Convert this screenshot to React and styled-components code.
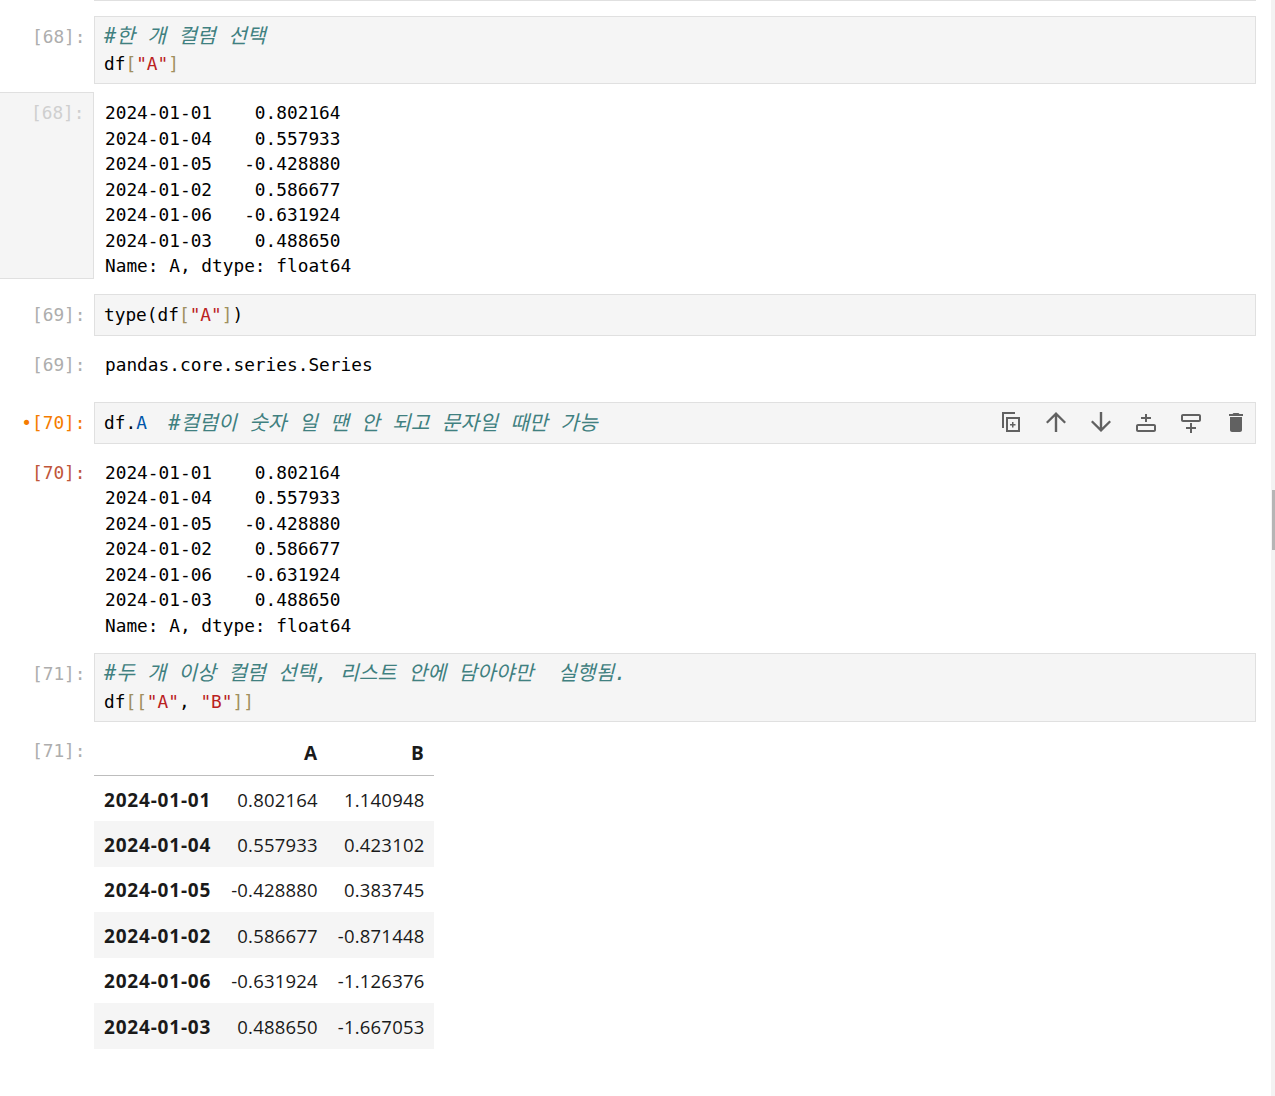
import React from "react";
import styled, { createGlobalStyle } from "styled-components";

const GlobalStyle = createGlobalStyle`
  html, body { margin: 0; padding: 0; background: #fff; }
  body { font-family: "DejaVu Sans Mono", "Noto Sans CJK KR", monospace; height: 1096px; overflow: hidden; }
`;

const MONO = `"DejaVu Sans Mono", "Noto Sans CJK KR", monospace`;

const Page = styled.div`
  display: flex;
  height: 1096px;
`;
const Notebook = styled.div`
  flex: 1;
  padding-right: 15px;
`;
const Scrollbar = styled.div`
  width: 4px;
  background: #f3f3f3;
  display: flex;
  flex-direction: column;
  align-items: flex-end;
  padding-top: 490px;
  box-sizing: border-box;
`;
const Thumb = styled.div`
  width: 3px;
  height: 60px;
  background: #b5b5b5;
`;
const TopRule = styled.div`
  height: 1px;
  margin-left: 94px;
  background: #e0e0e0;
  margin-bottom: 15px;
`;
const Row = styled.div`
  display: flex;
  margin-top: ${(p) => p.$top || 0}px;
`;
const Prompt = styled.div`
  width: 85.5px;
  padding-right: 8.5px;
  padding-top: 8px;
  flex: none;
  text-align: right;
  font: 17.8px/25.5px ${MONO};
  color: ${(p) => p.$color || "#adadad"};
`;
const ActivePrompt = styled.b`
  font-weight: normal;
  color: #f57c00;
`;
const ScrolledPrompt = styled(Prompt)`
  background: #f5f5f5;
  color: #cfcfcf;
  border-top: 1px solid #e0e0e0;
  border-bottom: 1px solid #e0e0e0;
  border-right: 1px solid #e0e0e0;
  width: 84.5px;
  height: 177.5px;
  box-sizing: content-box;
  padding-top: 7px;
`;
const InputBox = styled.div`
  position: relative;
  flex: 1;
  background: #f5f5f5;
  border: 1px solid #e0e0e0;
  padding: ${(p) => p.$pad || 5}px 9px;
  font: 17.8px/${(p) => p.$line || 28}px ${MONO};
  color: #000;
  white-space: pre;
`;
const Comment = styled.span`
  color: #408080;
  font-style: italic;
  font-size: 20.4px;
  line-height: 1;
  vertical-align: -1px;
`;
const Bracket = styled.span`
  color: #a08f5e;
`;
const Str = styled.span`
  color: #ba2121;
`;
const Attr = styled.span`
  color: #0055aa;
`;
const Output = styled.pre`
  margin: 0;
  padding: 8px 0 0 11px;
  font: 17.8px/25.5px ${MONO};
  color: #000;
`;
const Toolbar = styled.div`
  position: absolute;
  right: 0;
  top: 0;
  bottom: 0;
  display: flex;
  align-items: center;
  gap: 21px;
  padding-right: 7px;
`;
const ToolIcon = styled.svg`
  width: 24px;
  height: 24px;
  fill: #616161;
  display: block;
`;
const Table = styled.table`
  border-collapse: collapse;
  font-family: "Open Sans", "Noto Sans", sans-serif;
  font-size: 18.5px;
  letter-spacing: 0.2px;
  color: #1a1a1a;
  th, td {
    text-align: right;
    padding: 1px 10px 0;
    height: 45.5px;
    box-sizing: border-box;
    white-space: nowrap;
  }
  th {
    font-weight: 700;
    font-size: 19px;
    letter-spacing: 0.8px;
  }
  tbody th { padding-top: 2px; }
  thead tr { border-bottom: 1px solid #bdbdbd; }
  thead th { height: 46px; }
  tbody tr:nth-child(even) { background: #f5f5f5; }
`;

const series = `2024-01-01    0.802164
2024-01-04    0.557933
2024-01-05   -0.428880
2024-01-02    0.586677
2024-01-06   -0.631924
2024-01-03    0.488650
Name: A, dtype: float64`;

const rows = [
  ["2024-01-01", "0.802164", "1.140948"],
  ["2024-01-04", "0.557933", "0.423102"],
  ["2024-01-05", "-0.428880", "0.383745"],
  ["2024-01-02", "0.586677", "-0.871448"],
  ["2024-01-06", "-0.631924", "-1.126376"],
  ["2024-01-03", "0.488650", "-1.667053"],
];

const icons = [
  "M3 1h13v2H5v14H3zM7 6h14v15H7zM9 8v11h10V8zM13 11h1.500v2h2v1.500h-2v2H13v-2h-2V13h2z",
  "M12 1l10 10-1.600 1.600-7.200-7.200V21h-2.400V5.400l-7.200 7.200L2 11z",
  "M12 21L2 11l1.600-1.600 7.200 7.200V1h2.400v15.600l7.200-7.200L22 11z",
  "M11 3h2v3h4v2h-4v3h-2V8H7V6h4zM4 13h16c1.100 0 2 .9 2 2v4c0 1.100-.9 2-2 2H4c-1.100 0-2-.9-2-2v-4c0-1.100.9-2 2-2zm0 2v4h16v-4z",
  "M4 3h16c1.100 0 2 .9 2 2v4c0 1.100-.9 2-2 2H4c-1.100 0-2-.9-2-2V5c0-1.100.9-2 2-2zm0 2v4h16V5zM11 12h2v4h4v2h-4v4h-2v-4H7v-2h4z",
  "M6 19c0 1.100.9 2 2 2h8c1.100 0 2-.9 2-2V6H6zM19 3h-3.500l-1-1h-5l-1 1H5v2h14z",
];

export default function App() {
  return (
    <Page>
      <GlobalStyle />
      <Notebook>
        <TopRule />

        <Row>
          <Prompt>[68]:</Prompt>
          <InputBox>
            <Comment>#한 개 컬럼 선택</Comment>
            {"\n"}df<Bracket>[</Bracket><Str>"A"</Str><Bracket>]</Bracket>
          </InputBox>
        </Row>
        <Row $top={8}>
          <ScrolledPrompt>[68]:</ScrolledPrompt>
          <Output>{series}</Output>
        </Row>

        <Row $top={15}>
          <Prompt>[69]:</Prompt>
          <InputBox $line={30}>type(df<Bracket>[</Bracket><Str>"A"</Str><Bracket>]</Bracket>)</InputBox>
        </Row>
        <Row $top={8}>
          <Prompt>[69]:</Prompt>
          <Output>pandas.core.series.Series</Output>
        </Row>

        <Row $top={25}>
          <Prompt><ActivePrompt>•[70]:</ActivePrompt></Prompt>
          <InputBox $line={30}>
            df.<Attr>A</Attr>  <Comment>#컬럼이 숫자 일 땐 안 되고 문자일 때만 가능</Comment>
            <Toolbar>
              {icons.map((d) => (
                <ToolIcon key={d} viewBox="0 0 24 24"><path fillRule="evenodd" d={d} /></ToolIcon>
              ))}
            </Toolbar>
          </InputBox>
        </Row>
        <Row $top={7.5}>
          <Prompt $color="#c0563a">[70]:</Prompt>
          <Output>{series}</Output>
        </Row>

        <Row $top={14.5}>
          <Prompt>[71]:</Prompt>
          <InputBox $line={29} $pad={4.5}>
            <Comment>#두 개 이상 컬럼 선택, 리스트 안에 담아야만  실행됨.</Comment>
            {"\n"}df<Bracket>[[</Bracket><Str>"A"</Str>, <Str>"B"</Str><Bracket>]]</Bracket>
          </InputBox>
        </Row>
        <Row $top={8}>
          <Prompt>[71]:</Prompt>
          <Table>
            <thead>
              <tr><th></th><th>A</th><th>B</th></tr>
            </thead>
            <tbody>
              {rows.map((r) => (
                <tr key={r[0]}><th>{r[0]}</th><td>{r[1]}</td><td>{r[2]}</td></tr>
              ))}
            </tbody>
          </Table>
        </Row>
      </Notebook>
      <Scrollbar><Thumb /></Scrollbar>
    </Page>
  );
}
